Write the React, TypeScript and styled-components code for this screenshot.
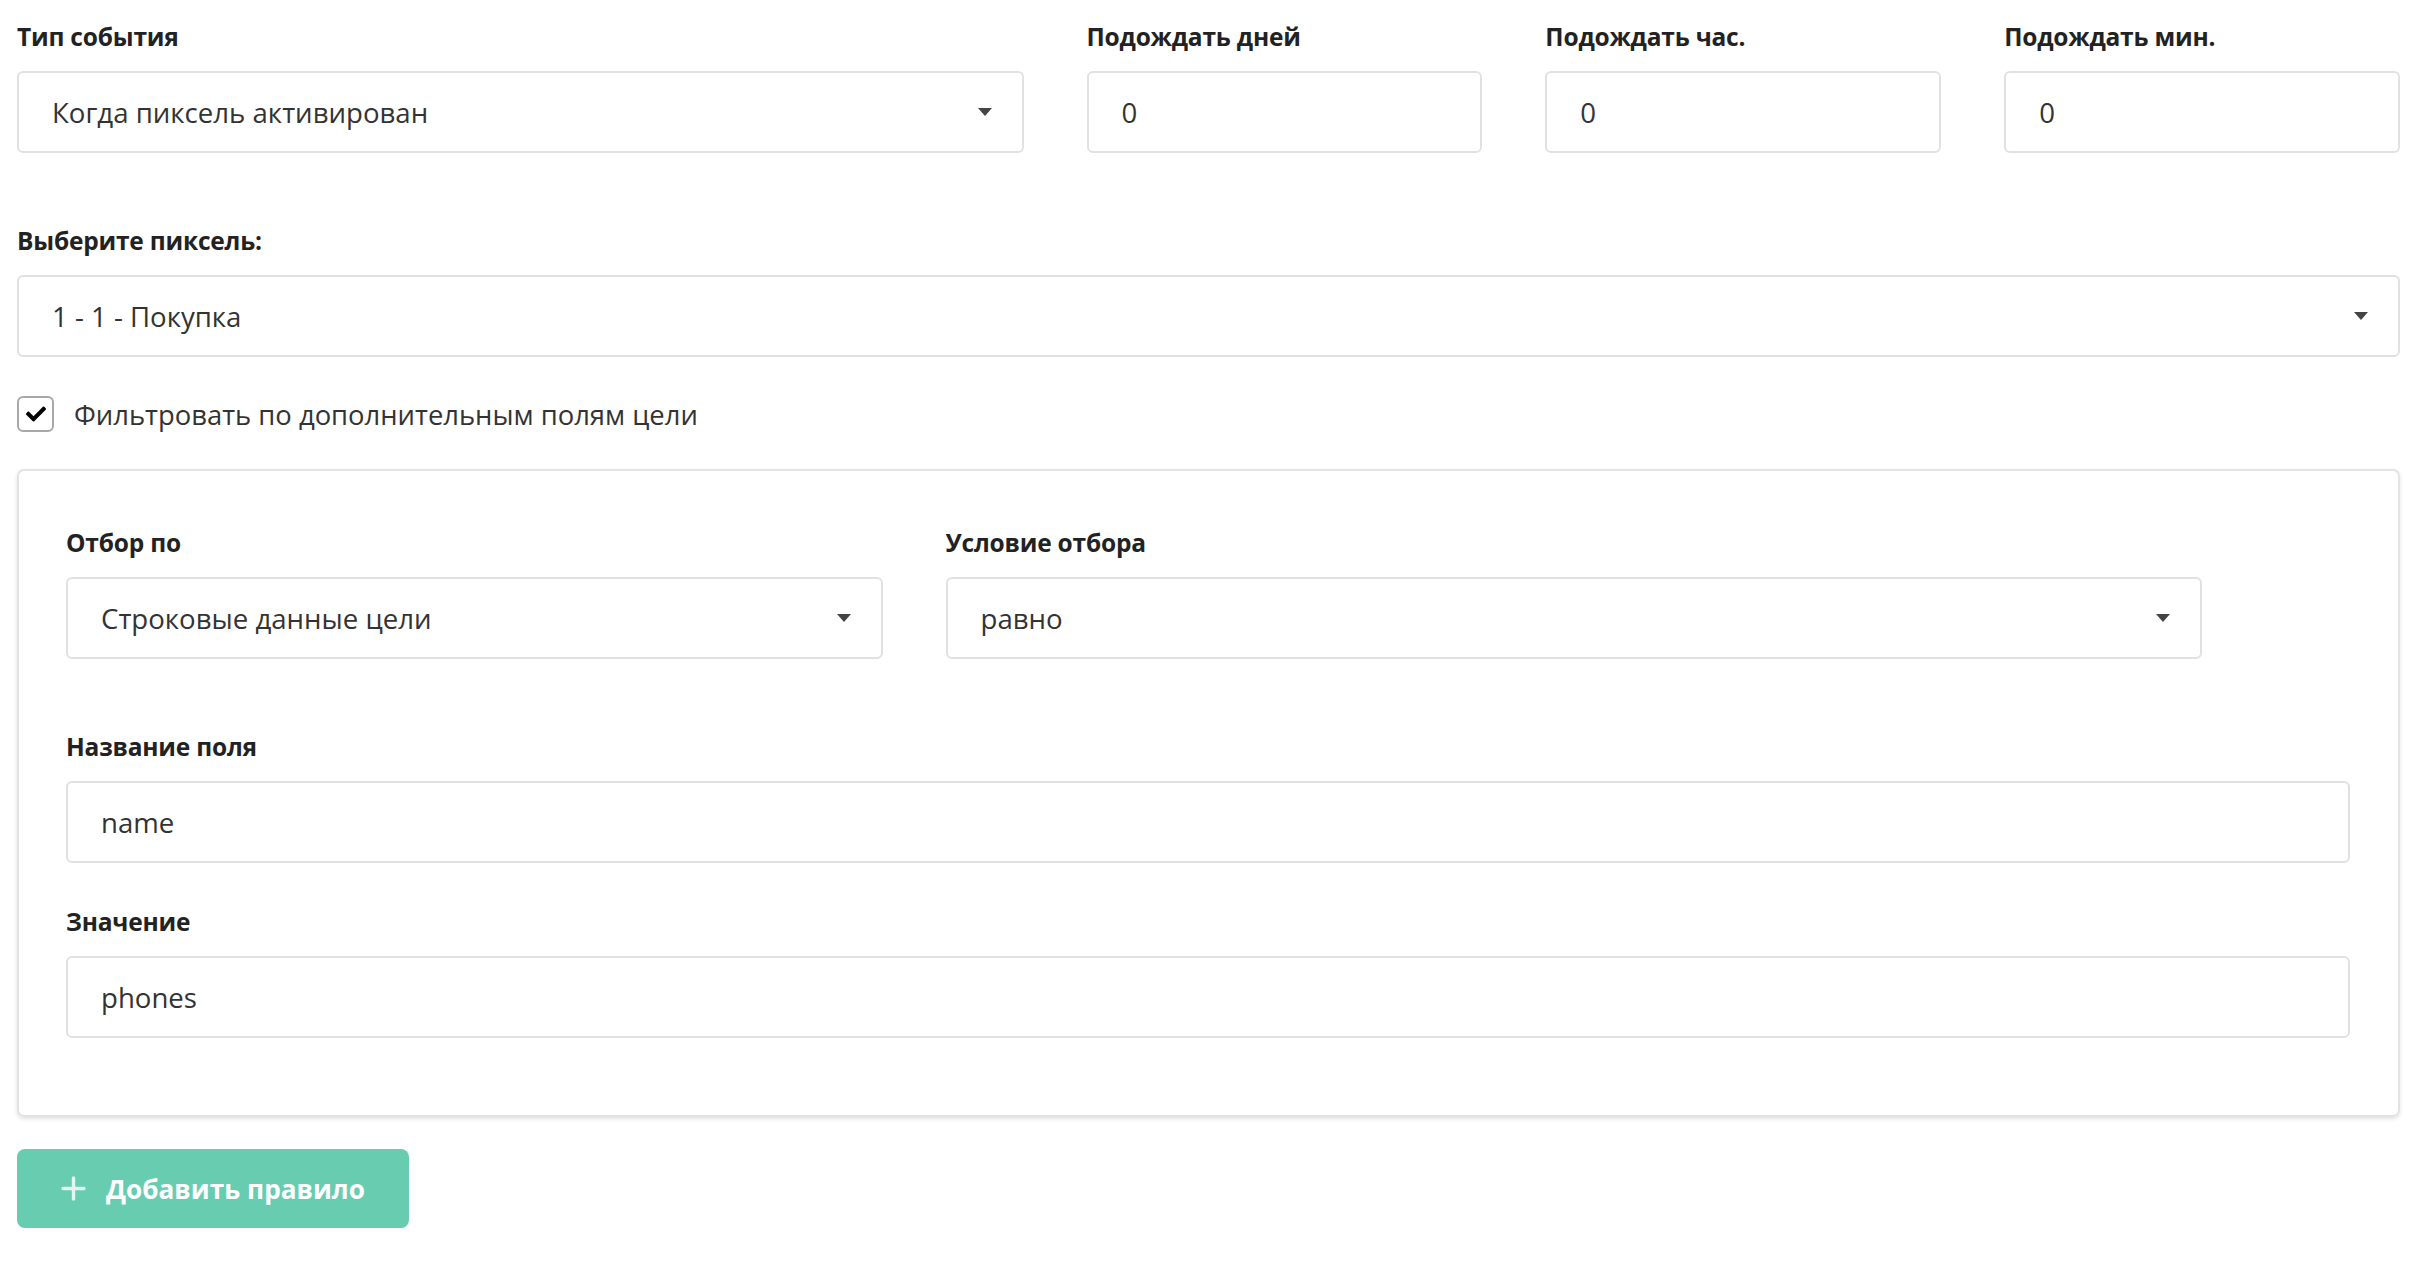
import React from "react";
import styled, { createGlobalStyle } from "styled-components";

const GlobalStyle = createGlobalStyle`
  html, body {
    margin: 0;
    padding: 0;
    background: #ffffff;
  }
  body {
    font-family: "Open Sans", "Noto Sans", "Liberation Sans", sans-serif;
    color: #333333;
  }
  * { box-sizing: border-box; }
`;

const Page = styled.div`
  padding: 22px 19px 40px 17px;
  display: flex;
  flex-direction: column;
`;

const TopRow = styled.div`
  display: grid;
  grid-template-columns: minmax(0, 1007fr) repeat(3, minmax(0, 396fr));
  column-gap: 63px;
  margin-bottom: 73px;
`;

const Field = styled.div<{ $mb?: number }>`
  display: flex;
  flex-direction: column;
  gap: 19px;
  margin-bottom: ${(p) => (p.$mb ?? 0)}px;
`;

const Label = styled.label`
  font-size: 24.5px;
  line-height: 30px;
  font-weight: 700;
  color: #222222;
  height: 30px;
  white-space: nowrap;
  letter-spacing: -0.2px;
`;

const Box = styled.div`
  height: 82px;
  border: 2px solid #e1e1e1;
  border-radius: 6px;
  background: #ffffff;
  display: flex;
  align-items: center;
  padding: 0 30px 0 33px;
  font-size: 27.6px;
  color: #333333;
  white-space: nowrap;
`;

const Value = styled.span`
  flex: 1;
`;

const Arrow = styled.span`
  width: 0;
  height: 0;
  border-left: 7.5px solid transparent;
  border-right: 7.5px solid transparent;
  border-top: 8px solid #444444;
`;

const CheckRow = styled.label`
  display: flex;
  align-items: center;
  gap: 20px;
  margin-top: 39px;
  margin-bottom: 37px;
  font-size: 27.4px;
  color: #333333;
  height: 36px;
`;

const CheckBox = styled.span`
  width: 37px;
  height: 36px;
  border: 2px solid #a8a8a8;
  border-radius: 6px;
  display: flex;
  align-items: center;
  justify-content: center;
  background: #ffffff;
`;

const Card = styled.div`
  border: 2px solid #e3e3e3;
  border-radius: 7px;
  box-shadow: 0 2px 4px rgba(0, 0, 0, 0.12);
  padding: 57px 48px 33px 47px;
  display: flex;
  flex-direction: column;
`;

const CardRow = styled.div`
  display: grid;
  grid-template-columns: 35.75% 55%;
  column-gap: 63px;
  margin-bottom: 73px;
`;

const AddButton = styled.button`
  margin-top: 32px;
  align-self: flex-start;
  height: 79px;
  width: 392px;
  border: none;
  border-radius: 8px;
  background: #68cdb0;
  color: #ffffff;
  font-family: inherit;
  font-size: 26.2px;
  font-weight: 700;
  display: flex;
  align-items: center;
  justify-content: center;
  gap: 20px;
  padding: 0;
  cursor: pointer;
`;

const Select = ({ value }: { value: string }) => (
  <Box>
    <Value>{value}</Value>
    <Arrow />
  </Box>
);

const Input = ({ value }: { value: string }) => (
  <Box>
    <Value>{value}</Value>
  </Box>
);

const CheckIcon = () => (
  <svg width="20" height="20" viewBox="0 0 512 512" aria-hidden>
    <path
      fill="#000"
      d="M173.898 439.404l-166.4-166.4c-9.997-9.997-9.997-26.206 0-36.204l36.203-36.204c9.997-9.998 26.207-9.998 36.204 0L192 312.69 432.095 72.596c9.997-9.997 26.207-9.997 36.204 0l36.203 36.204c9.997 9.997 9.997 26.206 0 36.204l-294.4 294.401c-9.998 9.997-26.207 9.997-36.204-.001z"
    />
  </svg>
);

const PlusIcon = () => (
  <svg width="25" height="25" viewBox="0 0 25 25" aria-hidden>
    <path
      d="M12.5 2v21M2 12.5h21"
      stroke="rgba(255,255,255,0.82)"
      strokeWidth="3.4"
      strokeLinecap="round"
      fill="none"
    />
  </svg>
);

export default function App() {
  return (
    <>
      <GlobalStyle />
      <Page>
        <TopRow>
          <Field>
            <Label>Тип события</Label>
            <Select value="Когда пиксель активирован" />
          </Field>
          <Field>
            <Label>Подождать дней</Label>
            <Input value="0" />
          </Field>
          <Field>
            <Label>Подождать час.</Label>
            <Input value="0" />
          </Field>
          <Field>
            <Label>Подождать мин.</Label>
            <Input value="0" />
          </Field>
        </TopRow>

        <Field>
          <Label>Выберите пиксель:</Label>
          <Select value="1 - 1 - Покупка" />
        </Field>

        <CheckRow>
          <CheckBox>
            <CheckIcon />
          </CheckBox>
          Фильтровать по дополнительным полям цели
        </CheckRow>

        <Card>
          <CardRow>
            <Field>
              <Label>Отбор по</Label>
              <Select value="Строковые данные цели" />
            </Field>
            <Field>
              <Label>Условие отбора</Label>
              <Select value="равно" />
            </Field>
          </CardRow>
          <Field $mb={44}>
            <Label>Название поля</Label>
            <Input value="name" />
          </Field>
          <Field $mb={44}>
            <Label>Значение</Label>
            <Input value="phones" />
          </Field>
        </Card>

        <AddButton type="button">
          <PlusIcon />
          Добавить правило
        </AddButton>
      </Page>
    </>
  );
}
